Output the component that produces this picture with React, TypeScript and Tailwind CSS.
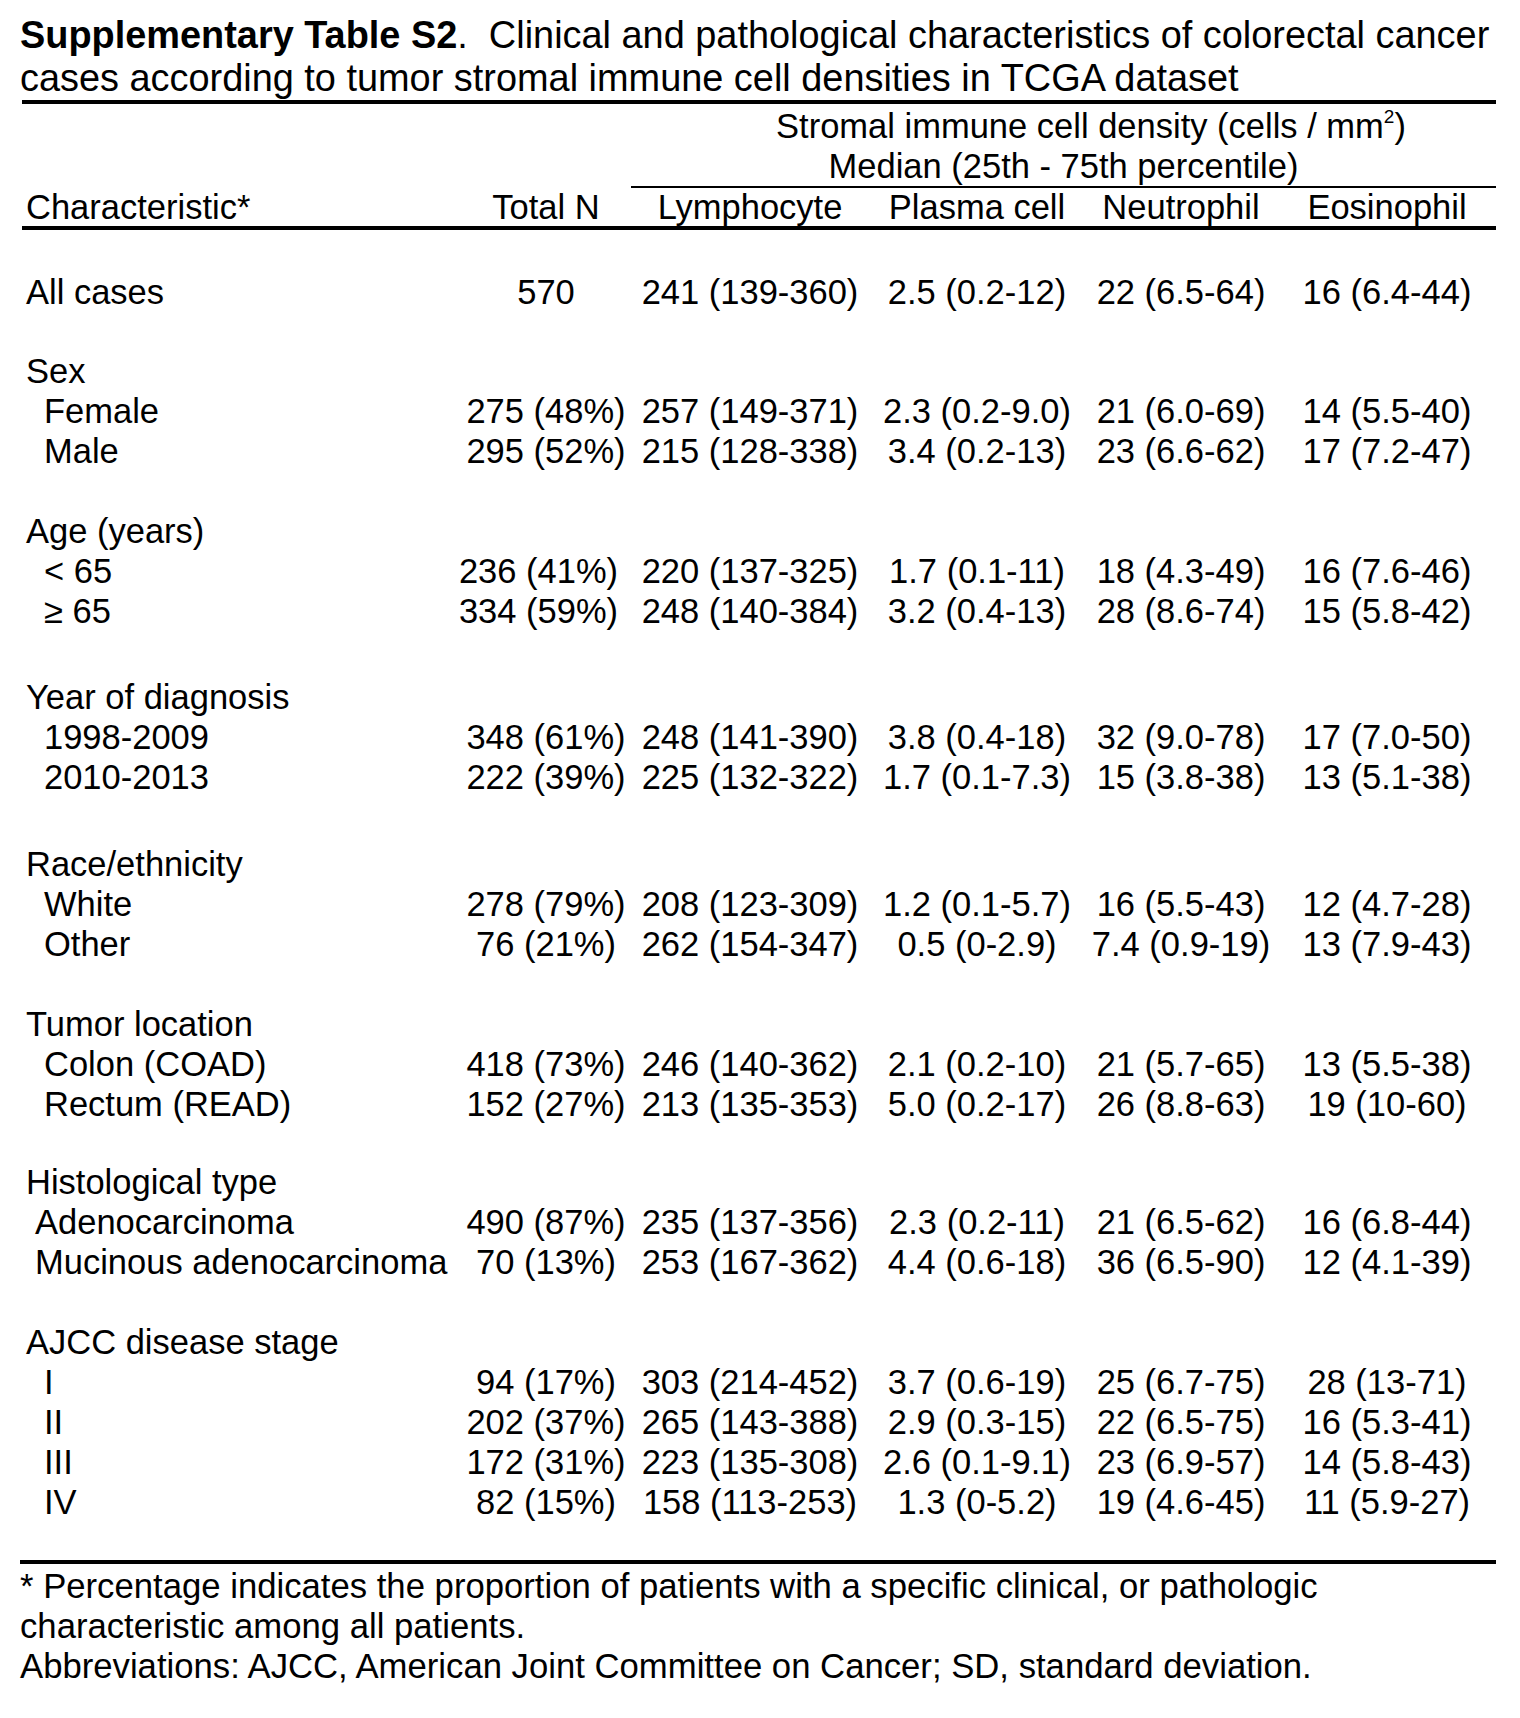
type Row = {
  label: string;
  indent: string;
  n: string;
  nClass?: string;
  vals: [string, string, string, string];
};

type Group = {
  title: string;
  gap: string;
  rows: Row[];
};

const COLS = "grid grid-cols-[422px_204px_204px_250px_158px_1fr]";
const SUB = "pl-[22px]";
const HISTO = "pl-[13px]";

const GROUPS: Group[] = [
  {
    title: "Sex",
    gap: "h-[39px]",
    rows: [
      { label: "Female", indent: SUB, n: "275 (48%)", vals: ["257 (149-371)", "2.3 (0.2-9.0)", "21 (6.0-69)", "14 (5.5-40)"] },
      { label: "Male", indent: SUB, n: "295 (52%)", vals: ["215 (128-338)", "3.4 (0.2-13)", "23 (6.6-62)", "17 (7.2-47)"] },
    ],
  },
  {
    title: "Age (years)",
    gap: "h-[40px]",
    rows: [
      { label: "< 65", indent: SUB, n: "236 (41%)", nClass: "pr-[15px]", vals: ["220 (137-325)", "1.7 (0.1-11)", "18 (4.3-49)", "16 (7.6-46)"] },
      { label: "≥ 65", indent: SUB, n: "334 (59%)", nClass: "pr-[15px]", vals: ["248 (140-384)", "3.2 (0.4-13)", "28 (8.6-74)", "15 (5.8-42)"] },
    ],
  },
  {
    title: "Year of diagnosis",
    gap: "h-[46px]",
    rows: [
      { label: "1998-2009", indent: SUB, n: "348 (61%)", vals: ["248 (141-390)", "3.8 (0.4-18)", "32 (9.0-78)", "17 (7.0-50)"] },
      { label: "2010-2013", indent: SUB, n: "222 (39%)", vals: ["225 (132-322)", "1.7 (0.1-7.3)", "15 (3.8-38)", "13 (5.1-38)"] },
    ],
  },
  {
    title: "Race/ethnicity",
    gap: "h-[47px]",
    rows: [
      { label: "White", indent: SUB, n: "278 (79%)", vals: ["208 (123-309)", "1.2 (0.1-5.7)", "16 (5.5-43)", "12 (4.7-28)"] },
      { label: "Other", indent: SUB, n: "76 (21%)", vals: ["262 (154-347)", "0.5 (0-2.9)", "7.4 (0.9-19)", "13 (7.9-43)"] },
    ],
  },
  {
    title: "Tumor location",
    gap: "h-[40px]",
    rows: [
      { label: "Colon (COAD)", indent: SUB, n: "418 (73%)", vals: ["246 (140-362)", "2.1 (0.2-10)", "21 (5.7-65)", "13 (5.5-38)"] },
      { label: "Rectum (READ)", indent: SUB, n: "152 (27%)", vals: ["213 (135-353)", "5.0 (0.2-17)", "26 (8.8-63)", "19 (10-60)"] },
    ],
  },
  {
    title: "Histological type",
    gap: "h-[38px]",
    rows: [
      { label: "Adenocarcinoma", indent: HISTO, n: "490 (87%)", vals: ["235 (137-356)", "2.3 (0.2-11)", "21 (6.5-62)", "16 (6.8-44)"] },
      { label: "Mucinous adenocarcinoma", indent: HISTO, n: "70 (13%)", vals: ["253 (167-362)", "4.4 (0.6-18)", "36 (6.5-90)", "12 (4.1-39)"] },
    ],
  },
  {
    title: "AJCC disease stage",
    gap: "h-[40px]",
    rows: [
      { label: "I", indent: SUB, n: "94 (17%)", vals: ["303 (214-452)", "3.7 (0.6-19)", "25 (6.7-75)", "28 (13-71)"] },
      { label: "II", indent: SUB, n: "202 (37%)", vals: ["265 (143-388)", "2.9 (0.3-15)", "22 (6.5-75)", "16 (5.3-41)"] },
      { label: "III", indent: SUB, n: "172 (31%)", vals: ["223 (135-308)", "2.6 (0.1-9.1)", "23 (6.9-57)", "14 (5.8-43)"] },
      { label: "IV", indent: SUB, n: "82 (15%)", vals: ["158 (113-253)", "1.3 (0-5.2)", "19 (4.6-45)", "11 (5.9-27)"] },
    ],
  },
];

function Cell({ children, className = "" }: { children?: React.ReactNode; className?: string }) {
  return <div className={`flex justify-center whitespace-nowrap ${className}`}>{children}</div>;
}

function DataRow({ row }: { row: Row }) {
  return (
    <div className={`${COLS} h-[40px] leading-[40px]`}>
      <div className={`whitespace-nowrap pl-[4px] ${row.indent}`}>{row.label}</div>
      <Cell className={row.nClass}>{row.n}</Cell>
      <Cell>{row.vals[0]}</Cell>
      <Cell>{row.vals[1]}</Cell>
      <Cell>{row.vals[2]}</Cell>
      <Cell className="pl-[18px]">{row.vals[3]}</Cell>
    </div>
  );
}

export default function App() {
  return (
    <div className="min-h-[1718px] w-[1520px] bg-white pl-[20px] text-black [font-family:'Liberation_Sans',Arial,sans-serif]">
      {/* caption */}
      <div className="pt-[14px] text-[37.9px] leading-[43px]">
        <div className="whitespace-pre">
          <span className="font-bold">Supplementary Table S2</span>.  Clinical and pathological characteristics of colorectal cancer
        </div>
        <div className="whitespace-nowrap">cases according to tumor stromal immune cell densities in TCGA dataset</div>
      </div>

      <div className="ml-[2px] w-[1474px] text-[34.5px]">
        <div className="h-[4px] bg-black" />

        {/* spanning header */}
        <div className="flex">
          <div className="w-[609px] shrink-0" />
          <div className="flex-1">
            <div className="pt-[2px] leading-[40px]">
              <div className="flex justify-center whitespace-nowrap pl-[55px]">
                <span>
                  Stromal immune cell density (cells / mm
                  <span className="align-[15px] text-[19px] leading-none">2</span>)
                </span>
              </div>
              <div className="flex justify-center whitespace-nowrap">Median (25th - 75th percentile)</div>
            </div>
            <div className="h-[2px] bg-black" />
          </div>
        </div>

        <div className={`${COLS} h-[38px] leading-[38px]`}>
          <div className="whitespace-nowrap pl-[4px]">Characteristic*</div>
          <Cell>Total N</Cell>
          <Cell>Lymphocyte</Cell>
          <Cell>Plasma cell</Cell>
          <Cell>Neutrophil</Cell>
          <Cell className="pl-[18px]">Eosinophil</Cell>
        </div>
        <div className="h-[4px] bg-black" />

        <div className="h-[42px]" />
        <DataRow row={{ label: "All cases", indent: "", n: "570", vals: ["241 (139-360)", "2.5 (0.2-12)", "22 (6.5-64)", "16 (6.4-44)"] }} />

        {GROUPS.map((g) => (
          <div key={g.title}>
            <div className={g.gap} />
            <div className="h-[40px] whitespace-nowrap pl-[4px] leading-[40px]">{g.title}</div>
            {g.rows.map((r) => (
              <DataRow key={r.label} row={r} />
            ))}
          </div>
        ))}

        <div className="h-[38px]" />
      </div>

      <div className="h-[4px] w-[1476px] bg-black" />

      {/* footnotes */}
      <div className="pt-[2px] text-[34.7px] leading-[40px]">
        <div className="whitespace-nowrap">* Percentage indicates the proportion of patients with a specific clinical, or pathologic</div>
        <div className="whitespace-nowrap">characteristic among all patients.</div>
        <div className="whitespace-nowrap">Abbreviations: AJCC, American Joint Committee on Cancer; SD, standard deviation.</div>
      </div>
    </div>
  );
}
